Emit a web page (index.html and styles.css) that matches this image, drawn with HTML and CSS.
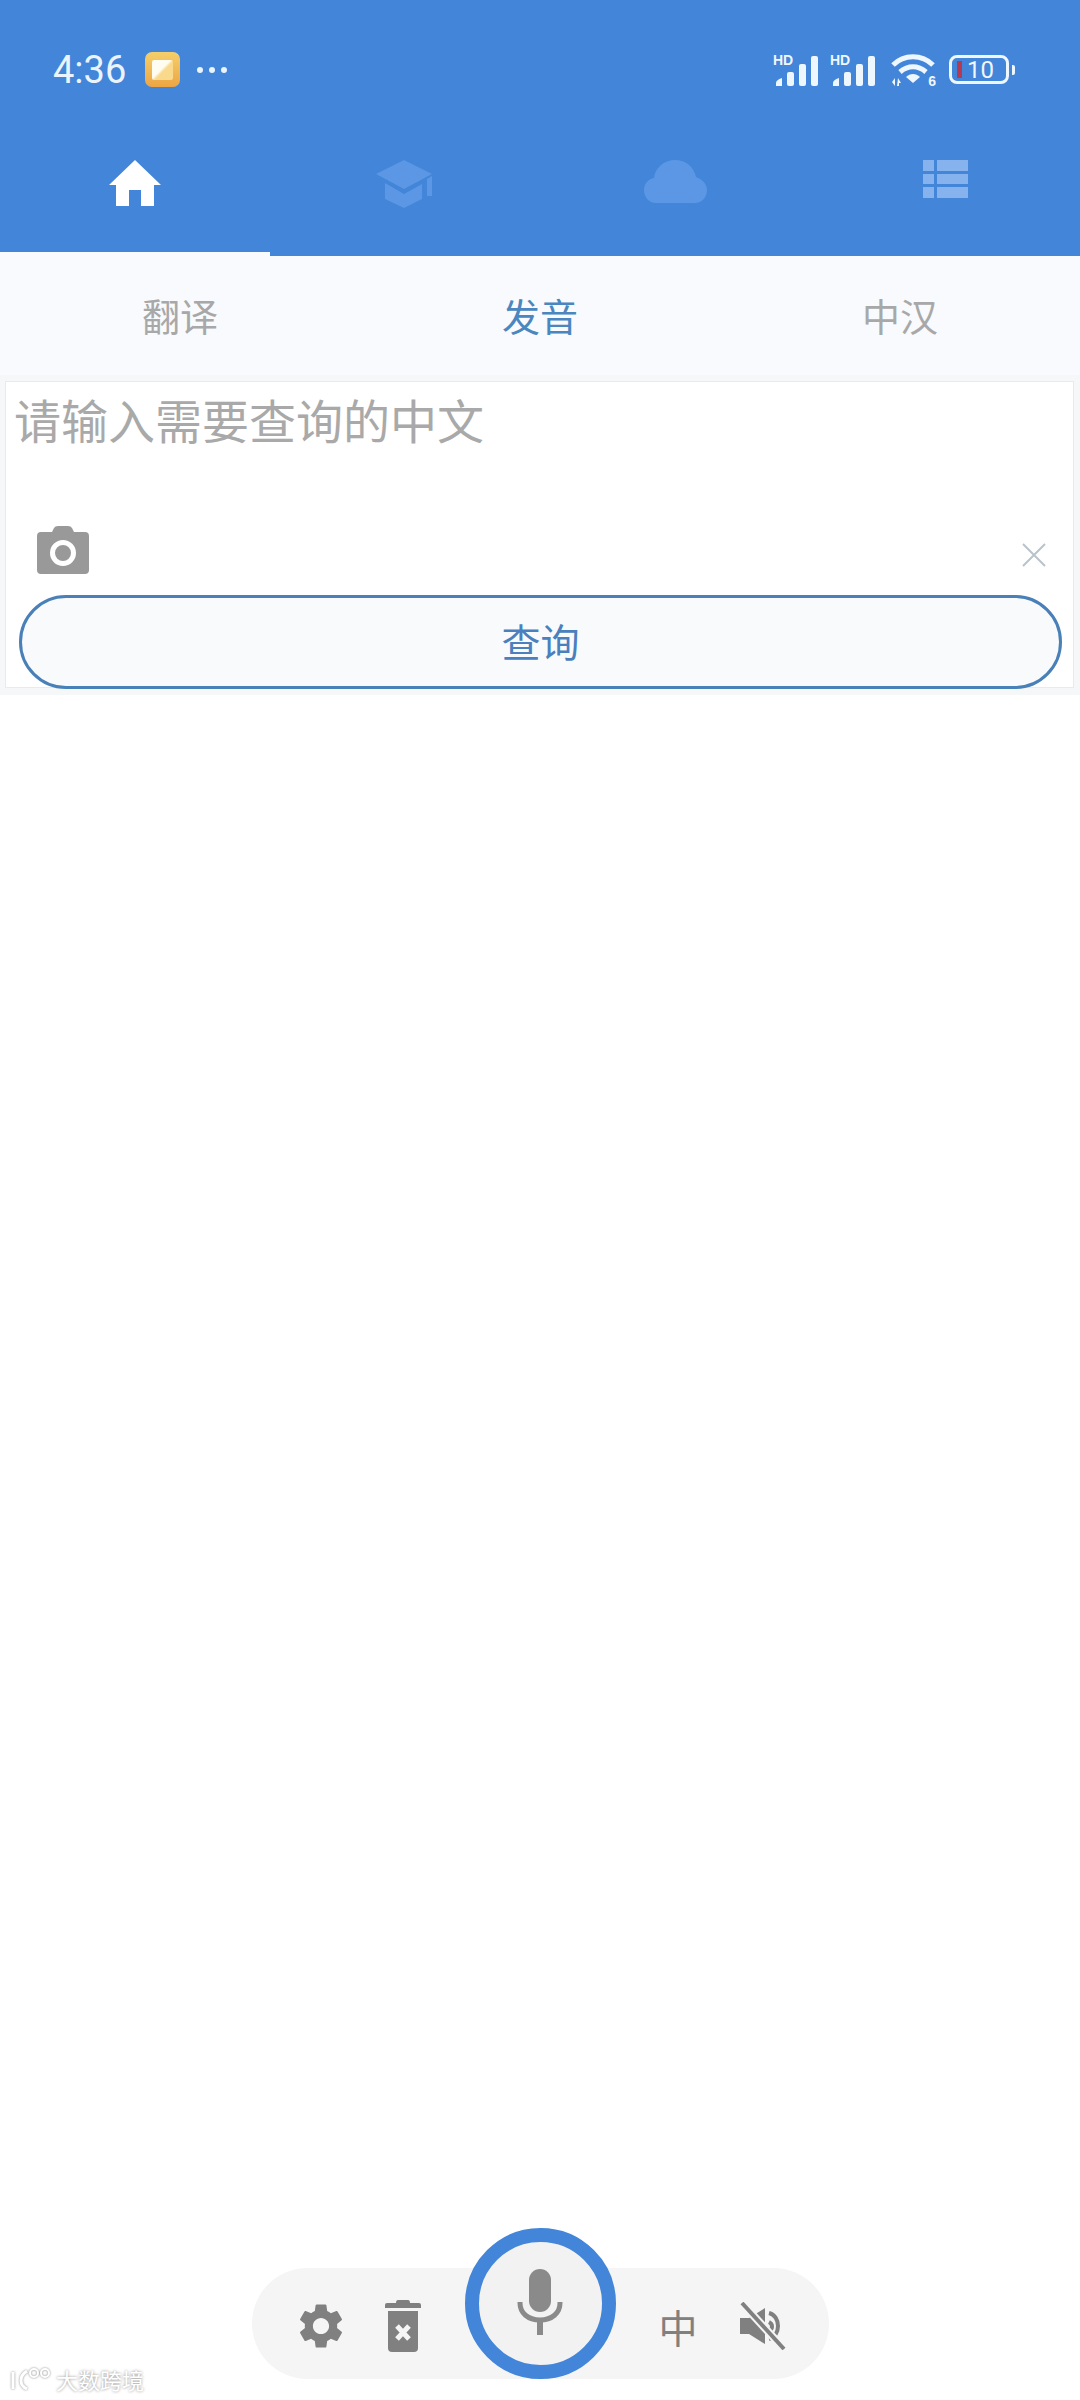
FILE: index.html
```html
<!DOCTYPE html>
<html lang="zh-CN">
<head>
    <meta charset="UTF-8">
    <meta name="viewport" content="width=device-width, initial-scale=1.0">
    <title>发音</title>
    <link rel="stylesheet" href="styles.css">
</head>
<body>

<div class="app">
    <header class="top">
        <div class="status-bar">
            <div class="status-left">
                <span class="time">4:36</span>
                <span class="app-badge"><span class="app-badge-inner"></span></span>
                <span class="dots"><i></i><i></i><i></i></span>
            </div>
            <div class="status-right">
                <div class="signal">
                    <span class="hd">HD</span>
                    <svg viewBox="0 0 48 32" width="48" height="32" fill="#eef6fe">
                        <path d="M3 32V29Q3 26 9 24V32z" />
                        <rect x="14" y="18" width="7" height="14" rx="2" />
                        <rect x="26" y="10" width="7" height="22" rx="2" />
                        <rect x="38" y="2" width="7" height="30" rx="2" />
                    </svg>
                </div>
                <div class="signal">
                    <span class="hd">HD</span>
                    <svg viewBox="0 0 48 32" width="48" height="32" fill="#eef6fe">
                        <path d="M3 32V29Q3 26 9 24V32z" />
                        <rect x="14" y="18" width="7" height="14" rx="2" />
                        <rect x="26" y="10" width="7" height="22" rx="2" />
                        <rect x="38" y="2" width="7" height="30" rx="2" />
                    </svg>
                </div>
                <div class="wifi">
                    <svg viewBox="0 0 46 34" width="46" height="34" fill="#eef6fe">
                        <path d="M3 12C14 1 32 1 43 12M10 19c8-7 18-7 26 0" fill="none" stroke="#eef6fe" stroke-width="5" />
                        <path d="M16 24c4-4 10-4 14 0l-7 6z" />
                        <path d="M2 29l3-4v8zM8 25l3 5H9v3H7z" />
                    </svg>
                    <span class="wifi-six">6</span>
                </div>
                <div class="battery">
                    <div class="battery-body"><span class="battery-level"></span><span class="battery-num">10</span></div>
                    <span class="battery-nub"></span>
                </div>
            </div>
        </div>
        <nav class="main-tabs">
            <div class="main-tab active">
                <svg viewBox="0 0 52 46" width="52" height="46" fill="#fff">
                    <path d="M26 0L52 25H45V46H32V30H20V46H7V25H0z" />
                </svg>
            </div>
            <div class="main-tab">
                <svg viewBox="0 0 58 48" width="58" height="48" fill="#5b97e4">
                    <path d="M28 0L56 14 28 29 0 14z" />
                    <path d="M9 23L28 34 46 24V39L28 48 9 39z" />
                    <path d="M51 19l5-3V36H51z" />
                </svg>
            </div>
            <div class="main-tab">
                <svg viewBox="0 0 63 43" width="63" height="43" fill="#5b97e4">
                    <path d="M12 43C5 43 0 37 0 30 0 24 4 19 10 18 11 8 20 0 31 0 42 0 50 7 52 17 58 19 63 24 63 30 63 37 58 43 51 43z" />
                </svg>
            </div>
            <div class="main-tab">
                <svg viewBox="0 0 45 38" width="45" height="38" fill="#86b3ee">
                    <rect x="0" y="0" width="11" height="11" />
                    <rect x="14" y="0" width="31" height="11" />
                    <rect x="0" y="14" width="11" height="10" />
                    <rect x="14" y="14" width="31" height="10" />
                    <rect x="0" y="27" width="11" height="11" />
                    <rect x="14" y="27" width="31" height="11" />
                </svg>
            </div>
        </nav>
    </header>

    <div class="sub-tabs">
        <div class="sub-tab">翻译</div>
        <div class="sub-tab current">发音</div>
        <div class="sub-tab">中汉</div>
    </div>

    <section class="query-wrap">
        <div class="query-box">
            <div class="placeholder">请输入需要查询的中文</div>
            <div class="query-tools">
                <svg viewBox="0 0 52 48" width="52" height="48">
                    <path d="M4 6H15L17 2Q18 0 21 0H31Q34 0 35 2L37 6H48Q52 6 52 10V44Q52 48 48 48H4Q0 48 0 44V10Q0 6 4 6z" fill="#999" />
                    <circle cx="26" cy="27" r="10.5" fill="none" stroke="#fff" stroke-width="5" />
                </svg>
                <svg class="clear-icon" viewBox="0 0 24 24" width="24" height="24">
                    <path d="M1 1L23 23M23 1L1 23" stroke="#b9c3cb" stroke-width="2" fill="none" />
                </svg>
            </div>
            <button class="query-button" type="button">查询</button>
        </div>
    </section>

    <div class="spacer"></div>

    <div class="voice-bar">
        <div class="voice-left">
            <svg viewBox="0 0 24 24" width="54" height="54" fill="#808080">
                <path d="M19.14 12.94c.04-.3.06-.61.06-.94 0-.32-.02-.64-.07-.94l2.03-1.58a.49.49 0 0 0 .12-.61l-1.92-3.32a.49.49 0 0 0-.59-.22l-2.39.96c-.5-.38-1.03-.7-1.62-.94l-.36-2.54a.48.48 0 0 0-.48-.41h-3.84c-.24 0-.43.17-.47.41l-.36 2.54c-.59.24-1.13.57-1.62.94l-2.39-.96c-.22-.08-.47 0-.59.22L2.74 8.87c-.12.21-.08.47.12.61l2.03 1.58c-.05.3-.09.63-.09.94s.02.64.07.94l-2.03 1.58a.49.49 0 0 0-.12.61l1.92 3.32c.12.22.37.29.59.22l2.39-.96c.5.38 1.03.7 1.62.94l.36 2.54c.05.24.24.41.48.41h3.84c.24 0 .44-.17.47-.41l.36-2.54c.59-.24 1.13-.56 1.62-.94l2.39.96c.22.08.47 0 .59-.22l1.92-3.32c.12-.22.07-.47-.12-.61l-2.01-1.58zM12 15.6c-1.98 0-3.6-1.62-3.6-3.6s1.62-3.6 3.6-3.6 3.6 1.62 3.6 3.6-1.62 3.6-3.6 3.6z" />
            </svg>
            <svg viewBox="0 0 36 52" width="36" height="52" fill="#808080">
                <path d="M13 0H23Q25 0 25 3H34Q36 3 36 5V8H0V5Q0 3 2 3H11Q11 0 13 0z" />
                <path d="M3 11H33V48Q33 52 29 52H7Q3 52 3 48z" />
                <path d="M12 26L24 39M24 26L12 39" stroke="#f5f5f5" stroke-width="5" />
            </svg>
        </div>
        <div class="mic-button">
            <svg viewBox="0 0 46 66" width="46" height="66" fill="#8a8a8a">
                <rect x="12" y="0" width="22" height="43" rx="11" />
                <path d="M3 33V34C3 44 11 51 23 51 35 51 43 44 43 34V33" fill="none" stroke="#8a8a8a" stroke-width="5" />
                <rect x="20" y="50" width="6" height="16" />
            </svg>
        </div>
        <div class="voice-right">
            <span class="lang">中</span>
            <svg viewBox="0 0 46 48" width="46" height="48" fill="#808080">
                <path d="M0 16H9L25 6V42L9 32H0z" />
                <path d="M29 11C41 14 41 34 29 37M29 20C33 22 33 27 29 29" fill="none" stroke="#808080" stroke-width="4" />
                <path d="M2 1L44 47" stroke="#f5f5f5" stroke-width="8" />
                <path d="M2 1L44 47" stroke="#808080" stroke-width="4" />
            </svg>
        </div>
    </div>

    <div class="watermark">
        <svg viewBox="0 0 42 24" width="42" height="24" fill="none" stroke="#fff" stroke-width="3">
            <path d="M3 5V22M17 4C9 9 9 18 17 22" />
            <circle cx="24" cy="6" r="4" stroke-width="2" />
            <circle cx="35" cy="6" r="4" stroke-width="2" />
        </svg>
        <span>大数跨境</span>
    </div>
</div>

</body>
</html>
```

FILE: styles.css
```css
* {
    box-sizing: border-box;
}

body {
    margin: 0;
    background-color: #fff;
    font-family: "Noto Sans CJK SC", "Noto Sans", sans-serif;
}

.app {
    position: relative;
    display: flex;
    flex-direction: column;
    width: 1080px;
    height: 2400px;
    overflow: hidden;
}

/* header */
.top {
    height: 256px;
    background-color: #4285d9;
}

.status-bar {
    display: flex;
    justify-content: space-between;
    align-items: center;
    height: 140px;
    padding: 0 65px 1px 53px;
}

.status-left,
.status-right {
    display: flex;
    align-items: center;
}

.time {
    font-family: Roboto, sans-serif;
    font-size: 38px;
    color: #eaf4fd;
}

.app-badge {
    display: flex;
    align-items: center;
    justify-content: center;
    width: 35px;
    height: 35px;
    margin-left: 19px;
    border-radius: 7px;
    background: linear-gradient(180deg, #f5cf6a, #eda544);
}

.app-badge-inner {
    width: 21px;
    height: 20px;
    background: linear-gradient(135deg, #fffdf2 45%, #f9d98c 55%);
    border-radius: 2px;
}

.dots {
    display: flex;
    gap: 6px;
    margin-left: 17px;
}

.dots i {
    width: 6px;
    height: 6px;
    border-radius: 50%;
    background-color: #eaf4fd;
}

.status-right {
    gap: 9px;
}

.signal {
    position: relative;
    width: 48px;
    height: 32px;
}

.signal svg {
    display: block;
}

.hd {
    position: absolute;
    left: 0;
    top: 0;
    font-family: "Liberation Sans", sans-serif;
    font-size: 14px;
    line-height: 12px;
    font-weight: 700;
    color: #eef6fe;
}

.wifi {
    position: relative;
    width: 46px;
    height: 34px;
    margin: 0 4px 0 3px;
}

.wifi svg {
    display: block;
}

.wifi-six {
    position: absolute;
    right: 0;
    bottom: 0;
    font-family: "Liberation Sans", sans-serif;
    font-size: 14px;
    line-height: 12px;
    font-weight: 700;
    color: #eef6fe;
}

.battery {
    display: flex;
    align-items: center;
    gap: 3px;
}

.battery-body {
    display: flex;
    align-items: center;
    width: 60px;
    height: 29px;
    padding-left: 5px;
    border: 3px solid #eef6fe;
    border-radius: 8px;
}

.battery-level {
    width: 5px;
    height: 17px;
    background-color: #b23a55;
}

.battery-num {
    margin-left: 5px;
    font-family: Roboto, sans-serif;
    font-size: 24px;
    line-height: 1;
    color: #eef6fe;
}

.battery-nub {
    width: 3px;
    height: 10px;
    border-radius: 0 2px 2px 0;
    background-color: #eef6fe;
}

.main-tabs {
    display: grid;
    grid-template-columns: repeat(4, 270px);
    height: 116px;
}

.main-tab {
    display: flex;
    justify-content: center;
    align-items: flex-start;
    padding-top: 20px;
}

.main-tab.active {
    border-bottom: 4px solid #f8fafd;
}

/* tabs under the header */
.sub-tabs {
    display: grid;
    grid-template-columns: repeat(3, 360px);
    height: 119px;
    background-color: #f8fafd;
}

.sub-tab {
    display: flex;
    justify-content: center;
    align-items: center;
    padding-bottom: 3px;
    font-size: 38px;
    color: #a8a8a8;
}

.sub-tab.current {
    color: #4a86bf;
}

/* query box */
.query-wrap {
    padding: 6px 6px 7px 5px;
    background-color: #f6f7f9;
}

.query-box {
    height: 307px;
    padding: 7px 12px 0 8px;
    background-color: #fff;
    border: 1px solid #e9eaec;
}

.placeholder {
    font-size: 47px;
    line-height: 60px;
    color: #a9a9a9;
}

.query-tools {
    display: flex;
    justify-content: space-between;
    align-items: center;
    height: 56px;
    margin-top: 73px;
    padding-left: 23px;
}

.clear-icon {
    margin: 10px 15px 0 0;
}

.query-button {
    display: block;
    width: 1043px;
    height: 94px;
    margin-top: 17px;
    margin-left: 5px;
    padding: 0 0 4px;
    border: 3px solid #4a80b8;
    border-radius: 47px;
    background-color: #f9fafb;
    font-family: inherit;
    font-size: 39px;
    color: #4a80bd;
}

.spacer {
    flex: 1;
}

/* voice bar at the bottom */
.voice-bar {
    display: flex;
    align-items: center;
    width: 577px;
    height: 111px;
    margin: 0 auto 21px;
    padding: 0 43px 0 42px;
    border-radius: 56px;
    background-color: #f5f5f5;
}

.voice-left,
.voice-right {
    display: flex;
    align-items: center;
}

.voice-left {
    gap: 37px;
    padding-top: 4px;
}

.voice-right {
    gap: 42px;
    padding-top: 4px;
}

.mic-button {
    display: flex;
    justify-content: center;
    align-items: flex-start;
    flex-shrink: 0;
    width: 151px;
    height: 151px;
    margin: -41px 43px 0 44px;
    padding-top: 27px;
    border: 14px solid #4285d9;
    border-radius: 50%;
    background-color: #f2f2f2;
}

.lang {
    font-size: 39px;
    color: #808080;
}

/* watermark over the corner */
.watermark {
    position: absolute;
    left: 10px;
    top: 2363px;
    display: flex;
    align-items: center;
    gap: 4px;
    font-size: 22px;
    color: #fff;
    text-shadow: 0 0 3px #8a8a8a;
}

.watermark svg {
    filter: drop-shadow(0 0 1px #8a8a8a);
}
```
